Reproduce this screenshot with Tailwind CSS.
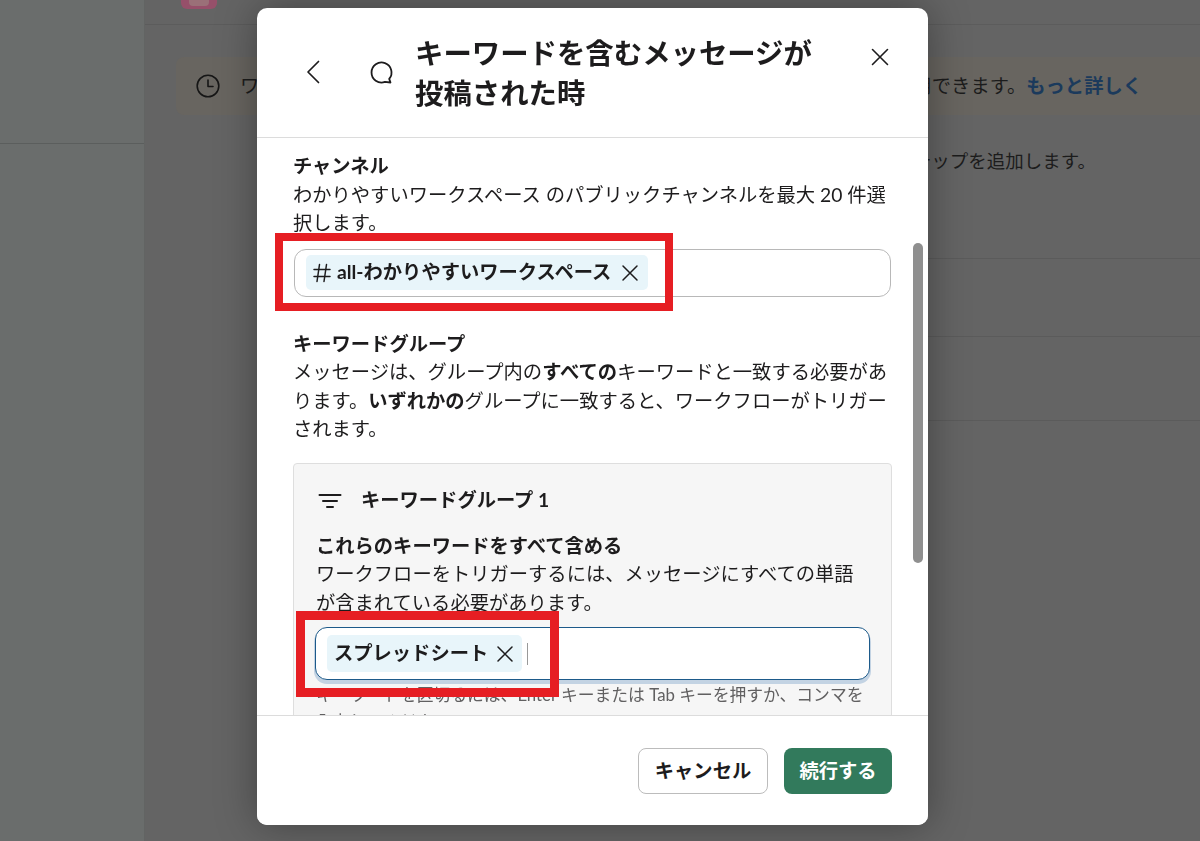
<!DOCTYPE html>
<html lang="ja">
<head>
    <meta charset="UTF-8">
    <meta name="viewport" content="width=device-width, initial-scale=1.0">
    <title>キーワードを含むメッセージが投稿された時</title>
    <script src="https://cdn.jsdelivr.net/npm/@tailwindcss/browser@4"></script>
</head>
<body class="bg-[#646464] font-['Lato','Noto_Sans_CJK_JP',sans-serif] text-[#1d1c1d] overflow-hidden">
    <!-- 背景のページ -->
    <div class="flex h-[841px] w-[1200px] overflow-hidden">
        <aside class="w-[145px] shrink-0 bg-[#6a6d6c] border-r border-[#626463]">
            <div class="h-[144px] border-b border-[#5b5e5d]"></div>
        </aside>
        <main class="flex-1 min-w-0">
            <div class="h-[25px] border-b border-[#5c5c5c] pl-[36px] flex items-start overflow-hidden">
                <div class="w-[36px] h-[9px] rounded-b-[6px] bg-[#96506a] flex justify-center">
                    <div class="w-[20px] h-[6px] rounded-b-[4px] bg-[#9a7078]"></div>
                </div>
                <span class="ml-[18px] -mt-[23px] font-bold text-[19px] leading-[28px] text-[#1c1c1c]">無題のワークフロー</span>
            </div>
            <div class="mt-[32px] ml-[31px] h-[58px] rounded-l-[8px] bg-[#686560] flex items-center pl-[20px] pr-[58px] text-[19.3px] text-[#1c1c1c]">
                <svg class="w-[24px] h-[24px] shrink-0" viewBox="0 0 24 24" fill="none" stroke="#161616" stroke-width="1.6" stroke-linecap="round" stroke-linejoin="round"><circle cx="12" cy="12" r="10.8"/><path d="M12 6v6.5h5"/></svg>
                <span class="ml-[20px]">ワ</span>
                <span class="ml-auto">用できます。<b class="text-[#1b3a5c]">もっと詳しく</b></span>
            </div>
            <p class="mt-[32px] pr-[104px] text-right text-[18.5px] leading-[28px] text-[#1c1c1c]">ステップを追加します。</p>
            <div class="mt-[83px] border-b border-[#5b5b5b] ml-[200px]"></div>
            <div class="mt-[77px] border-b border-[#5b5b5b] ml-[200px]"></div>
            <div class="mt-[83px] border-b border-[#5b5b5b] ml-[200px]"></div>
        </main>
    </div>

    <!-- モーダル -->
    <div class="fixed left-[257px] top-[8px] w-[671px] h-[817px] bg-white rounded-[10px] shadow-[0_0_40px_rgba(0,0,0,0.35)] flex flex-col overflow-hidden">
        <header class="h-[130px] shrink-0 border-b border-[#dcdcdc] flex items-start pl-[47px] pr-[39px]">
            <svg class="w-[18px] h-[26px] mt-[51px] shrink-0" viewBox="0 0 18 26" fill="none" stroke="#1d1c1d" stroke-width="1.7" stroke-linecap="round" stroke-linejoin="round"><path d="M14.500 2.500 4 13l10.500 10.500"/></svg>
            <svg class="w-[25px] h-[25px] mt-[52px] ml-[47px] shrink-0" viewBox="0 0 25 25" fill="none" stroke="#1d1c1d" stroke-width="1.8" stroke-linejoin="round"><path d="M20.200 18.900A10 10 0 1 0 15.900 21.900L21.500 22.500Z"/></svg>
            <h1 class="w-[416px] ml-[21px] mt-[25px] text-[28.4px] leading-[40px] font-bold">キーワードを含むメッセージが投稿された時</h1>
            <svg class="w-[18px] h-[18px] mt-[40px] ml-auto shrink-0" viewBox="0 0 18 18" fill="none" stroke="#1d1c1d" stroke-width="1.600" stroke-linecap="round"><path d="M1.500 1.500l15 15M16.500 1.500l-15 15"/></svg>
        </header>

        <div class="relative flex-1 min-h-0 overflow-hidden pt-[14px] pl-[36px] pr-[36px] text-[19.3px] leading-[28.5px]">
            <h2 class="font-bold">チャンネル</h2>
            <p>わかりやすいワークスペース のパブリックチャンネルを最大 20 件選択します。</p>
            <div class="mt-[11px] mx-px h-[48px] rounded-[12px] border border-[#b8b8b8] flex items-center pl-[11px]">
                <span class="h-[35px] pl-[7px] pr-[9px] rounded-[5px] bg-[#e8f5fa] flex items-center font-bold">
                    <svg class="w-[18px] h-[20px] mr-[6px] shrink-0" viewBox="0 0 18 20" fill="none" stroke="#1d1c1d" stroke-width="1.500" stroke-linecap="round"><path d="M6.500 1.500 4 18.500M13.500 1.500 11 18.500M1 6.500h16M1 13.500h16"/></svg>
                    all-わかりやすいワークスペース
                    <svg class="w-[18px] h-[18px] ml-[10px] shrink-0" viewBox="0 0 18 18" fill="none" stroke="#1d1c1d" stroke-width="1.500" stroke-linecap="round"><path d="M2 2l14 14M16 2 2 16"/></svg>
                </span>
            </div>

            <h2 class="mt-[33px] font-bold">キーワードグループ</h2>
            <p>メッセージは、グループ内の<b>すべての</b>キーワードと一致する必要があります。<b>いずれかの</b>グループに一致すると、ワークフローがトリガーされます。</p>

            <section class="mt-[19px] border border-[#dedede] rounded-[4px] bg-[#f6f6f6] px-[22px] pt-[22px] h-[320px]">
                <div class="flex items-center h-[30px] font-bold">
                    <svg class="w-[24px] h-[16px] ml-[2px] shrink-0" viewBox="0 0 24 16" fill="none" stroke="#1d1c1d" stroke-width="2" stroke-linecap="round"><path d="M1.500 2h21M5 8h14M9 14h6"/></svg>
                    <span class="ml-[19px]">キーワードグループ 1</span>
                </div>
                <h3 class="mt-[16px] font-bold">これらのキーワードをすべて含める</h3>
                <p>ワークフローをトリガーするには、メッセージにすべての単語が含まれている必要があります。</p>
                <div class="mt-[10px] -mx-px h-[53px] rounded-[12px] border border-[#1d5a8a] bg-white shadow-[0_3px_0_1px_#c3d3e3] flex items-center pl-[11px]">
                    <span class="h-[37px] pl-[7px] pr-[8px] rounded-[5px] bg-[#e8f5fa] flex items-center font-bold">
                        スプレッドシート
                        <svg class="w-[18px] h-[18px] ml-[8px] shrink-0" viewBox="0 0 18 18" fill="none" stroke="#1d1c1d" stroke-width="1.500" stroke-linecap="round"><path d="M2 2l14 14M16 2 2 16"/></svg>
                    </span>
                    <span class="ml-[5px] w-px h-[22px] bg-[#999]"></span>
                </div>
                <p class="mt-[1px] text-[16.8px] leading-[27px] text-[#616061]">キーワードを区切るには、Enter キーまたは Tab キーを押すか、コンマを入力してください。</p>
            </section>

            <!-- スクロールバー -->
            <div class="absolute right-[5px] top-[105px] w-[10px] h-[320px] rounded-full bg-[#8f8f8f]"></div>
        </div>

        <footer class="h-[110px] shrink-0 border-t border-[#dcdcdc] flex items-start justify-end gap-[16px] pt-[32px] pr-[36px] bg-white">
            <button class="w-[130px] h-[46px] rounded-[8px] border border-[#bcbcbc] bg-white font-bold text-[19.3px]">キャンセル</button>
            <button class="w-[108px] h-[46px] rounded-[8px] bg-[#327a5c] text-white font-bold text-[19.3px]">続行する</button>
        </footer>
    </div>

    <!-- 赤枠の注釈 -->
    <div class="fixed left-[275px] top-[233px] w-[398px] h-[78px] border-[8px] border-[#e61e23]"></div>
    <div class="fixed left-[296px] top-[611px] w-[263px] h-[86px] border-[9px] border-[#e61e23]"></div>
</body>
</html>
